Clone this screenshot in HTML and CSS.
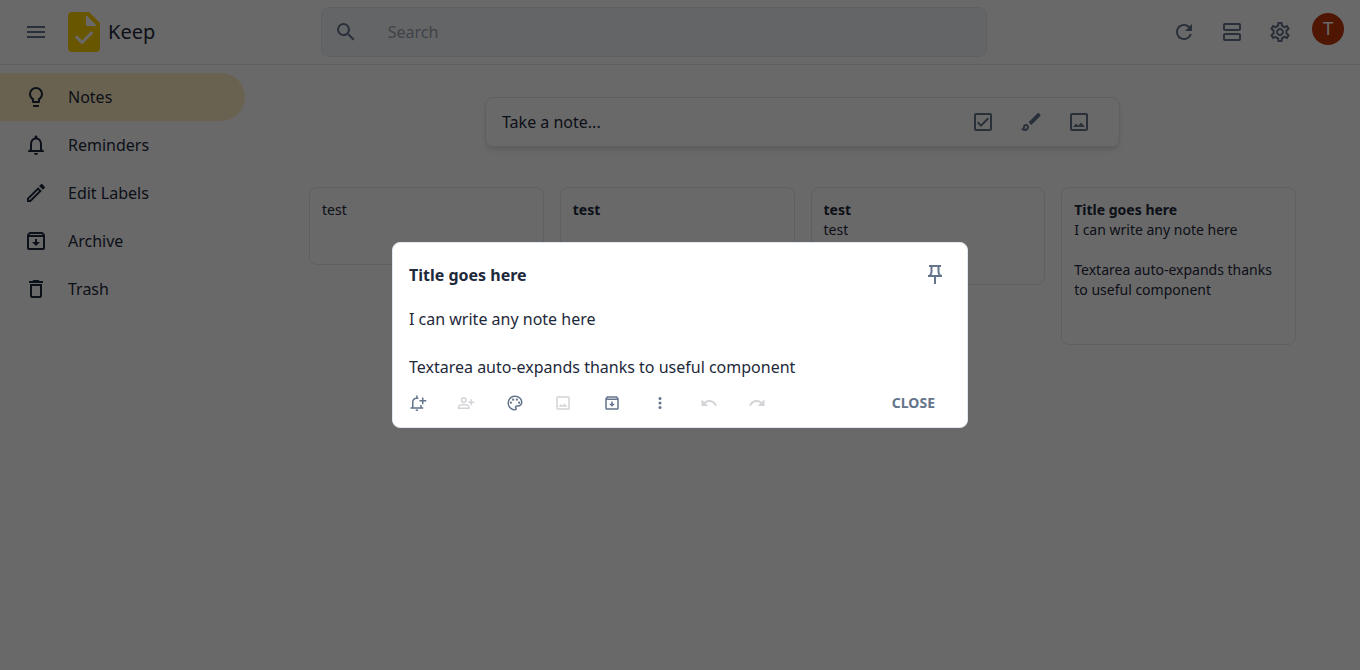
FILE: index.html
```html
<!DOCTYPE html>
<html lang="en">
<head>
<meta charset="utf-8">
<title>Keep</title>
<meta name="viewport" content="width=device-width, initial-scale=1">
<link rel="stylesheet" href="styles.css">
</head>
<body>
<svg class="sprite" aria-hidden="true">
  <symbol id="i-archive" viewBox="0 0 24 24"><path d="M20.54 5.23l-1.39-1.68C18.88 3.21 18.47 3 18 3H6c-.47 0-.88.21-1.16.55L3.46 5.23C3.17 5.57 3 6.02 3 6.5V19c0 1.1.9 2 2 2h14c1.1 0 2-.9 2-2V6.5c0-.48-.17-.93-.46-1.27zM6.24 5h11.52l.83 1H5.42l.82-1zM5 19V8h14v11H5zm8-9h-2v3H8l4 4 4-4h-3z"/></symbol>
  <symbol id="i-image" viewBox="0 0 24 24"><path d="M19 5v14H5V5h14m0-2H5c-1.100 0-2 .9-2 2v14c0 1.100.9 2 2 2h14c1.100 0 2-.9 2-2V5c0-1.100-.9-2-2-2zM14 12.500l-2.700 3.300-2.300-2.300L6 17h12z"/></symbol>
  <symbol id="i-undo" viewBox="0 0 24 24"><path d="M12.500 8c-2.650 0-5.050.99-6.900 2.600L2 7v9h9l-3.620-3.620c1.390-1.160 3.160-1.880 5.120-1.880 3.540 0 6.550 2.310 7.600 5.500l2.370-.78C21.080 11.030 17.150 8 12.500 8z"/></symbol>
</svg>

<div class="app">
  <header class="topbar">
    <div class="brand">
      <button class="icon-btn" type="button" aria-label="Main menu"><svg class="icon" viewBox="0 0 24 24"><path d="M3 6h18v2H3zM3 11h18v2H3zM3 16h18v2H3z"/></svg></button>
      <a class="logo" href="#">
        <svg class="logo-mark" viewBox="0 0 32 40" aria-hidden="true"><path fill="#ffd000" d="M4 0h17l11 11v25a4 4 0 0 1-4 4H4a4 4 0 0 1-4-4V4a4 4 0 0 1 4-4z"/><path fill="#fff" d="M18 3v11h11z"/><path fill="none" stroke="#fff" stroke-width="3" d="M8 24.500l6 6 10.500-10.500"/></svg>
        <span>Keep</span>
      </a>
    </div>
    <form class="search" role="search">
      <svg class="icon" viewBox="0 0 24 24" aria-hidden="true"><path d="M15.500 14h-.79l-.28-.27A6.471 6.471 0 0 0 16 9.500 6.500 6.500 0 1 0 9.500 16c1.610 0 3.090-.59 4.230-1.570l.27.28v.79l5 4.990L20.490 19l-4.990-5zm-6 0C7.010 14 5 11.990 5 9.500S7.010 5 9.500 5 14 7.010 14 9.500 11.990 14 9.500 14z"/></svg>
      <input type="search" placeholder="Search" aria-label="Search">
    </form>
    <div class="actions">
      <button class="icon-btn" type="button" aria-label="Refresh"><svg class="icon" viewBox="0 0 24 24"><path d="M17.650 6.350A7.958 7.958 0 0 0 12 4c-4.420 0-7.990 3.580-7.990 8s3.570 8 7.990 8c3.730 0 6.840-2.550 7.730-6h-2.080A5.990 5.990 0 0 1 12 18c-3.310 0-6-2.690-6-6s2.690-6 6-6c1.660 0 3.140.69 4.220 1.780L13 11h7V4l-2.350 2.350z"/></svg></button>
      <button class="icon-btn" type="button" aria-label="List view"><svg class="icon line" viewBox="0 0 24 24"><rect x="4" y="4" width="16" height="6" rx="1"/><rect x="4" y="14" width="16" height="6" rx="1"/></svg></button>
      <button class="icon-btn" type="button" aria-label="Settings"><svg class="icon" viewBox="0 0 24 24"><path d="M19.43 12.98c.04-.32.07-.64.07-.98 0-.34-.03-.66-.07-.98l2.110-1.650c.19-.15.24-.42.12-.64l-2-3.460a.5.5 0 0 0-.61-.22l-2.490 1c-.52-.4-1.080-.73-1.690-.98l-.38-2.650A.488.488 0 0 0 14 2h-4c-.25 0-.46.18-.49.42l-.38 2.650c-.61.25-1.170.59-1.690.98l-2.490-1a.566.566 0 0 0-.18-.03c-.17 0-.34.09-.43.25l-2 3.460c-.13.22-.07.49.12.64l2.110 1.650c-.04.32-.07.65-.07.98 0 .33.03.66.07.98l-2.110 1.650c-.19.15-.24.42-.12.64l2 3.460a.5.5 0 0 0 .61.22l2.490-1c.52.4 1.080.73 1.690.98l.38 2.650c.03.24.24.42.49.42h4c.25 0 .46-.18.49-.42l.38-2.650c.61-.25 1.170-.59 1.690-.98l2.490 1c.06.02.12.03.18.03.17 0 .34-.09.43-.25l2-3.460c.12-.22.07-.49-.12-.64l-2.110-1.650zm-1.980-1.710c.04.31.05.52.05.73 0 .21-.02.43-.05.73l-.14 1.130.89.7 1.080.84-.7 1.210-1.270-.51-1.040-.42-.9.68c-.43.32-.84.56-1.250.73l-1.060.43-.16 1.130-.2 1.350h-1.400l-.19-1.350-.16-1.130-1.060-.43c-.43-.18-.83-.41-1.230-.71l-.91-.7-1.060.43-1.270.51-.7-1.210 1.080-.84.89-.7-.14-1.130c-.03-.31-.05-.54-.05-.74s.02-.43.05-.73l.14-1.130-.89-.7-1.080-.84.7-1.210 1.270.51 1.040.42.9-.68c.43-.32.84-.56 1.250-.73l1.060-.43.16-1.130.2-1.350h1.390l.19 1.350.16 1.130 1.060.43c.43.18.83.41 1.230.71l.91.7 1.060-.43 1.270-.51.7 1.210-1.070.85-.89.7.14 1.130zM12 8c-2.210 0-4 1.790-4 4s1.790 4 4 4 4-1.790 4-4-1.790-4-4-4zm0 6c-1.100 0-2-.9-2-2s.9-2 2-2 2 .9 2 2-.9 2-2 2z"/></svg></button>
      <button class="avatar" type="button" aria-label="Account">T</button>
    </div>
  </header>

  <div class="body">
    <nav class="sidebar" aria-label="Sections">
      <a class="nav-item active" href="#"><svg class="icon" viewBox="0 0 24 24"><path d="M12 2a7 7 0 0 1 7 7c0 2.380-1.190 4.470-3 5.740V17a1 1 0 0 1-1 1H9a1 1 0 0 1-1-1v-2.260C6.190 13.470 5 11.380 5 9a7 7 0 0 1 7-7zM9 20h6v1a1 1 0 0 1-1 1h-4a1 1 0 0 1-1-1zM12 4a5 5 0 0 0-5 5c0 2.050 1.230 3.810 3 4.580V16h4v-2.420c1.770-.77 3-2.530 3-4.580a5 5 0 0 0-5-5z" fill-rule="evenodd"/></svg>Notes</a>
      <a class="nav-item" href="#"><svg class="icon" viewBox="0 0 24 24"><path d="M12 22c1.100 0 2-.9 2-2h-4c0 1.100.9 2 2 2zm6-6v-5c0-3.070-1.630-5.640-4.500-6.320V4c0-.83-.67-1.500-1.500-1.500s-1.500.67-1.500 1.500v.68C7.640 5.360 6 7.920 6 11v5l-2 2v1h16v-1l-2-2zm-2 1H8v-6c0-2.480 1.510-4.500 4-4.500s4 2.020 4 4.500v6z"/></svg>Reminders</a>
      <a class="nav-item" href="#"><svg class="icon" viewBox="0 0 24 24"><path d="M14.060 9.020l.92.92L5.920 19H5v-.92l9.060-9.060M17.660 3c-.25 0-.51.1-.7.29l-1.830 1.830 3.750 3.750 1.830-1.830c.39-.39.39-1.020 0-1.410l-2.340-2.340c-.2-.2-.45-.29-.71-.29zm-3.600 3.190L3 17.250V21h3.750L17.810 9.940l-3.750-3.750z"/></svg>Edit Labels</a>
      <a class="nav-item" href="#"><svg class="icon"><use href="#i-archive"/></svg>Archive</a>
      <a class="nav-item" href="#"><svg class="icon" viewBox="0 0 24 24"><path d="M6 19c0 1.100.9 2 2 2h8c1.100 0 2-.9 2-2V7H6v12zM8 9h8v10H8V9zm7.500-5l-1-1h-5l-1 1H5v2h14V4z"/></svg>Trash</a>
    </nav>

    <main class="content">
      <div class="composer">
        <input type="text" placeholder="Take a note..." aria-label="Take a note">
        <button class="icon-btn" type="button" aria-label="New list"><svg class="icon" viewBox="0 0 24 24"><path d="M19 3H5c-1.100 0-2 .9-2 2v14c0 1.100.9 2 2 2h14c1.100 0 2-.9 2-2V5c0-1.100-.9-2-2-2zm0 16H5V5h14v14zM18 9l-1.400-1.400-6.600 6.600-2.600-2.600L6 13l4 4z"/></svg></button>
        <button class="icon-btn" type="button" aria-label="New note with drawing"><svg class="icon" viewBox="0 0 24 24"><path d="M7 16c.55 0 1 .45 1 1 0 1.100-.9 2-2 2-.17 0-.33-.02-.5-.05.31-.55.5-1.210.5-1.950 0-.55.45-1 1-1M19.300 3c-.26 0-.51.1-.71.29L9.600 12.250 12.350 15l8.960-8.960a.996.996 0 0 0 0-1.410l-1.340-1.340c-.2-.2-.45-.29-.7-.29zM7 14c-1.660 0-3 1.340-3 3 0 1.310-1.160 2-2 2 .92 1.220 2.490 2 4 2 2.210 0 4-1.790 4-4 0-1.660-1.340-3-3-3z"/></svg></button>
        <button class="icon-btn" type="button" aria-label="New note with image"><svg class="icon"><use href="#i-image"/></svg></button>
      </div>

      <section class="notes" aria-label="Notes">
        <article class="note"><p>test</p></article>
        <article class="note"><h2>test</h2></article>
        <article class="note"><h2>test</h2><p>test</p></article>
        <article class="note"><h2>Title goes here</h2><p>I can write any note here

Textarea auto-expands thanks to useful component</p></article>
      </section>
    </main>
  </div>
</div>

<div class="backdrop">
  <form class="modal" role="dialog" aria-modal="true" aria-label="Edit note">
    <div class="modal-head">
      <input class="modal-title" type="text" value="Title goes here" aria-label="Title">
      <button class="pin" type="button" aria-label="Pin note"><svg class="icon line" viewBox="0 0 24 24"><path d="M6 3h12M8.500 3v6c0 1.500-.5 2.500-2 4M15.500 3v6c0 1.500.5 2.500 2 4M5 13h14M12 13v8"/></svg></button>
    </div>
    <textarea class="modal-text" rows="3" aria-label="Note">I can write any note here

Textarea auto-expands thanks to useful component</textarea>
    <div class="modal-foot">
      <div class="tools">
        <button type="button" aria-label="Remind me"><svg class="icon small line" viewBox="0 0 24 24"><path d="M2 18.500h17M5 18.500V11c0-3 2-5.500 5.500-5.500 1 0 1.500 0 2 .5M16 14.500v4M10.500 5.500V2M18.300 4.500v9M14 9h9"/><path d="M9 21.500h3"/></svg></button>
        <button type="button" disabled aria-label="Collaborator"><svg class="icon small line" viewBox="0 0 24 24"><circle cx="9" cy="8" r="3"/><path d="M2 19v-1.500c0-2 3.500-3.500 7-3.500s7 1.500 7 3.500V19zM19 7v8M15 11h8"/></svg></button>
        <button type="button" aria-label="Background options"><svg class="icon small" viewBox="0 0 24 24"><path d="M12 22C6.490 22 2 17.510 2 12S6.490 2 12 2s10 4.040 10 9c0 3.310-2.690 6-6 6h-1.770c-.28 0-.5.22-.5.5 0 .12.05.23.13.33.41.47.64 1.060.64 1.670A2.500 2.500 0 0 1 12 22zm0-18c-4.410 0-8 3.590-8 8s3.590 8 8 8c.28 0 .5-.22.5-.5a.54.54 0 0 0-.14-.35c-.41-.46-.63-1.050-.63-1.650a2.500 2.500 0 0 1 2.500-2.500H16c2.210 0 4-1.790 4-4 0-3.860-3.590-7-8-7z"/><circle cx="6.500" cy="11.500" r="1.500"/><circle cx="9.500" cy="7.500" r="1.500"/><circle cx="14.500" cy="7.500" r="1.500"/><circle cx="17.500" cy="11.500" r="1.500"/></svg></button>
        <button type="button" disabled aria-label="Add image"><svg class="icon small"><use href="#i-image"/></svg></button>
        <button type="button" aria-label="Archive note"><svg class="icon small"><use href="#i-archive"/></svg></button>
        <button type="button" aria-label="More"><svg class="icon small" viewBox="0 0 24 24"><circle cx="12" cy="6" r="2"/><circle cx="12" cy="12" r="2"/><circle cx="12" cy="18" r="2"/></svg></button>
        <button type="button" disabled aria-label="Undo"><svg class="icon small"><use href="#i-undo"/></svg></button>
        <button type="button" disabled aria-label="Redo"><svg class="icon small mirrored"><use href="#i-undo"/></svg></button>
      </div>
      <button class="close" type="button">CLOSE</button>
    </div>
  </form>
</div>
</body>
</html>
```

FILE: styles.css
```css
*, *::before, *::after { box-sizing: border-box; }

body {
  margin: 0;
  font: 16px/24px "Noto Sans", sans-serif;
  color: #1e293b;
  background: #fff;
}

button, input, textarea {
  margin: 0;
  padding: 0;
  border: 0;
  background: none;
  color: inherit;
  font: inherit;
  outline: none;
}

h2, p { margin: 0; }
a { color: inherit; text-decoration: none; }

.sprite { display: none; }
.icon { display: block; flex: none; width: 24px; height: 24px; fill: currentColor; }
.icon.small { width: 18px; height: 18px; }
.icon.line { fill: none; stroke: currentColor; stroke-width: 2; }
.mirrored { transform: scaleX(-1); }

.icon-btn {
  display: grid;
  place-items: center;
  flex: none;
  width: 48px;
  height: 48px;
  color: #64748b;
}

/* Top bar */
.topbar {
  display: flex;
  align-items: center;
  justify-content: space-between;
  height: 65px;
  padding: 0 16px 1px 12px;
  border-bottom: 1px solid #e2e8f0;
}
.brand, .actions { display: flex; align-items: center; }
.brand { gap: 8px; }
.logo { display: flex; align-items: center; gap: 8px; font-size: 20px; }
.logo-mark { width: 32px; height: 40px; }
.search {
  display: flex;
  align-items: center;
  gap: 30px;
  width: 50%;
  height: 50px;
  padding: 0 12px;
  border: 1px solid #e2e8f0;
  border-radius: 8px;
  background: #f1f5f9;
  color: #64748b;
}
.search input { flex: 1; min-width: 0; }
.search input::placeholder { color: #9ca3af; opacity: 1; }
.actions { padding-left: 8px; }
.avatar {
  width: 32px;
  height: 32px;
  margin: 0 0 6px 8px;
  border-radius: 50%;
  background: #bf360c;
  color: #fff;
  font: 18px/32px Roboto, sans-serif;
}

/* Page body */
.body { display: grid; grid-template-columns: 245px 1fr; }
.sidebar { padding-top: 8px; }
.nav-item {
  display: flex;
  align-items: center;
  gap: 20px;
  height: 48px;
  padding-left: 24px;
  border-radius: 0 24px 24px 0;
}
.nav-item.active { background: #feefc3; }

.content { padding: 32px 64px; }
.composer {
  display: flex;
  align-items: center;
  max-width: 635px;
  height: 50px;
  margin: 0 auto 40px;
  padding: 0 16px;
  border: 1px solid #e5e7eb;
  border-radius: 8px;
  box-shadow: 0 4px 6px -1px rgba(0, 0, 0, .1), 0 2px 4px -2px rgba(0, 0, 0, .1);
}
.composer input { flex: 1; min-width: 0; }
.composer input::placeholder { color: #1e293b; opacity: 1; }

.notes {
  display: grid;
  grid-template-columns: repeat(4, 1fr);
  align-items: start;
  gap: 16px;
}
.note {
  padding: 12px 12px 44px;
  border: 1px solid #e2e8f0;
  border-radius: 8px;
  font-size: 14px;
  line-height: 20px;
}
.note h2 { font-size: inherit; font-weight: 700; }
.note p { white-space: pre-line; }

/* Note editor */
.backdrop {
  position: fixed;
  inset: 0;
  display: flex;
  align-items: center;
  justify-content: center;
  background: rgba(0, 0, 0, .59);
}
.modal {
  width: 100%;
  max-width: 576px;
  padding: 0 16px;
  border: 1px solid #e2e8f0;
  border-radius: 8px;
  background: #fff;
}
.modal-head { display: flex; align-items: center; height: 64px; }
.modal-title { flex: 1; min-width: 0; font-weight: 700; }
.pin { margin-right: 4px; color: #64748b; }
.modal-text { display: block; width: 100%; resize: none; overflow: hidden; }
.modal-foot {
  display: flex;
  align-items: center;
  justify-content: space-between;
  height: 48px;
  color: #64748b;
}
.tools { display: flex; justify-content: space-between; width: 100%; max-width: 357px; }
.tools button:disabled { color: #d4d4d8; }
.close { padding: 0 16px; font-size: 14px; font-weight: 700; }
```
